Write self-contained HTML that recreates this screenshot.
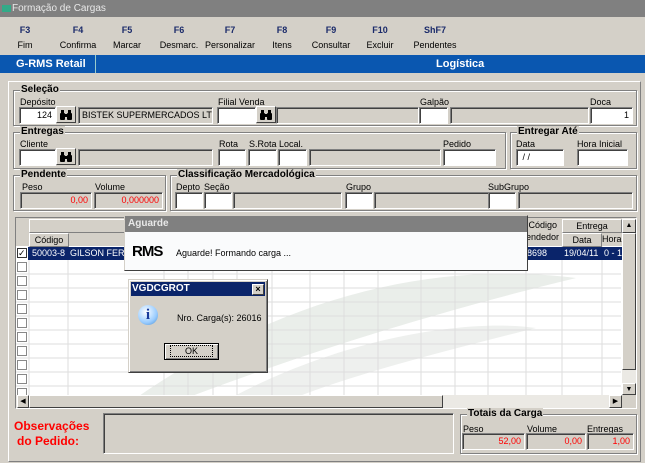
<!DOCTYPE html>
<html><head><meta charset="utf-8"><style>
*{box-sizing:border-box;margin:0;padding:0}
body{width:645px;height:463px;overflow:hidden;background:#d4d0c8;font-family:"Liberation Sans",sans-serif;font-size:9px;color:#000;position:relative}
.a{position:absolute}
.in{position:absolute;height:17px;background:#fff;border:1px solid;border-color:#808080 #fff #fff #808080;box-shadow:inset 1px 1px 0 #404040;font-size:9px;line-height:15px;padding:0 3px;white-space:nowrap;overflow:hidden}
.ro{background:#d4d0c8}
.g{position:absolute;border:1px solid #808080;box-shadow:1px 1px 0 #fff,inset 1px 1px 0 #fff}
.gt{position:absolute;top:-7px;left:6px;background:#d4d0c8;font-weight:bold;font-size:10px;padding:0 1px}
.lb{position:absolute;font-size:9px}
.btn{position:absolute;height:17px;width:20px;background:#d4d0c8;border:1px solid;border-color:#fff #404040 #404040 #fff;text-align:center;padding-top:3px}
.red{color:#f00;text-align:right}
.fk{position:absolute;top:25px;width:50px;text-align:center;font-size:9px}
.fk b{display:block;color:#1a2a6a;margin-bottom:5px}
.sb{position:absolute;background:#d4d0c8;border:1px solid;border-color:#fff #404040 #404040 #fff;font-size:7px;text-align:center;line-height:11px}
</style></head><body>
<div class="a" style="left:0;top:0;width:645px;height:17px;background:#808080;color:#e8e8e8;font-size:10px;line-height:17px;padding-left:12px">Formação de Cargas</div>
<div class="a" style="left:2px;top:5px;width:9px;height:7px;background:#3a8;"></div>

<div class="fk" style="left:0"><b>F3</b>Fim</div>
<div class="fk" style="left:53px"><b>F4</b>Confirma</div>
<div class="fk" style="left:102px"><b>F5</b>Marcar</div>
<div class="fk" style="left:154px"><b>F6</b>Desmarc.</div>
<div class="fk" style="left:204px;width:52px"><b>F7</b>Personalizar</div>
<div class="fk" style="left:257px"><b>F8</b>Itens</div>
<div class="fk" style="left:306px"><b>F9</b>Consultar</div>
<div class="fk" style="left:355px"><b>F10</b>Excluir</div>
<div class="fk" style="left:410px"><b>ShF7</b>Pendentes</div>

<div class="a" style="left:0;top:55px;width:645px;height:18px;background:#0a57b0;color:#fff;font-weight:bold;font-size:11px;line-height:18px">
<span class="a" style="left:16px">G-RMS Retail</span>
<div class="a" style="left:95px;top:0;width:1px;height:18px;background:#9cc"></div>
<span class="a" style="left:436px">Logística</span></div>

<div class="a" style="left:8px;top:81px;width:633px;height:381px;border:1px solid #fff;border-right-color:#808080;border-bottom-color:#808080"></div>

<svg width="0" height="0" style="position:absolute"><defs><g id="bn"><rect x="0" y="3" width="5" height="7" rx="1"/><rect x="7" y="3" width="5" height="7" rx="1"/><rect x="1" y="0" width="3" height="4"/><rect x="8" y="0" width="3" height="4"/><rect x="4" y="4" width="4" height="3"/></g></defs></svg>

<div class="g" style="left:13px;top:90px;width:624px;height:36px"><span class="gt">Seleção</span></div>
<span class="lb" style="left:20px;top:97px">Depósito</span>
<div class="in" style="left:19px;top:107px;width:37px;text-align:right">124</div>
<div class="btn" style="left:56px;top:106px"><svg width="12" height="10"><use href="#bn"/></svg></div>
<div class="in ro" style="left:78px;top:107px;width:135px">BISTEK SUPERMERCADOS LTDA.</div>
<span class="lb" style="left:218px;top:97px">Filial Venda</span>
<div class="in" style="left:217px;top:107px;width:39px"></div>
<div class="btn" style="left:256px;top:106px"><svg width="12" height="10"><use href="#bn"/></svg></div>
<div class="in ro" style="left:276px;top:107px;width:143px"></div>
<span class="lb" style="left:420px;top:97px">Galpão</span>
<div class="in" style="left:419px;top:107px;width:29px"></div>
<div class="in ro" style="left:450px;top:107px;width:139px"></div>
<span class="lb" style="left:590px;top:97px">Doca</span>
<div class="in" style="left:590px;top:107px;width:43px;text-align:right">1</div>

<div class="g" style="left:13px;top:132px;width:493px;height:37px"><span class="gt">Entregas</span></div>
<span class="lb" style="left:20px;top:139px">Cliente</span>
<div class="in" style="left:19px;top:149px;width:37px"></div>
<div class="btn" style="left:56px;top:148px"><svg width="12" height="10"><use href="#bn"/></svg></div>
<div class="in ro" style="left:78px;top:149px;width:135px"></div>
<span class="lb" style="left:219px;top:139px">Rota</span>
<div class="in" style="left:218px;top:149px;width:28px"></div>
<span class="lb" style="left:249px;top:139px">S.Rota</span>
<div class="in" style="left:248px;top:149px;width:29px"></div>
<span class="lb" style="left:279px;top:139px">Local.</span>
<div class="in" style="left:278px;top:149px;width:29px"></div>
<div class="in ro" style="left:309px;top:149px;width:132px"></div>
<span class="lb" style="left:443px;top:139px">Pedido</span>
<div class="in" style="left:443px;top:149px;width:53px"></div>

<div class="g" style="left:510px;top:132px;width:127px;height:37px"><span class="gt">Entregar Até</span></div>
<span class="lb" style="left:516px;top:139px">Data</span>
<div class="in" style="left:516px;top:149px;width:48px">&nbsp;/ /</div>
<span class="lb" style="left:577px;top:139px">Hora Inicial</span>
<div class="in" style="left:577px;top:149px;width:51px"></div>

<div class="g" style="left:13px;top:175px;width:153px;height:36px"><span class="gt">Pendente</span></div>
<span class="lb" style="left:22px;top:182px">Peso</span>
<div class="in ro red" style="left:20px;top:192px;width:72px">0,00</div>
<span class="lb" style="left:95px;top:182px">Volume</span>
<div class="in ro red" style="left:94px;top:192px;width:69px">0,000000</div>

<div class="g" style="left:170px;top:175px;width:467px;height:36px"><span class="gt">Classificação Mercadológica</span></div>
<span class="lb" style="left:176px;top:182px">Depto</span>
<div class="in" style="left:175px;top:192px;width:28px"></div>
<span class="lb" style="left:204px;top:182px">Seção</span>
<div class="in" style="left:204px;top:192px;width:28px"></div>
<div class="in ro" style="left:233px;top:192px;width:109px"></div>
<span class="lb" style="left:346px;top:182px">Grupo</span>
<div class="in" style="left:345px;top:192px;width:28px"></div>
<div class="in ro" style="left:374px;top:192px;width:116px"></div>
<span class="lb" style="left:488px;top:182px">SubGrupo</span>
<div class="in" style="left:488px;top:192px;width:28px"></div>
<div class="in ro" style="left:518px;top:192px;width:115px"></div>

<!-- grid -->
<div class="a" style="left:15px;top:217px;width:622px;height:192px;border:1px solid;border-color:#808080 #fff #fff #808080;background:#fff;overflow:hidden">
<svg class="a" style="left:0;top:0" width="620" height="190">
<path d="M120 180 C250 90 400 40 560 60 C520 70 350 110 150 188Z" fill="#eaeeea"/>
<path d="M200 188 C320 120 450 100 520 110 C440 130 320 160 260 188Z" fill="#eef0ee"/>
<g stroke="#ddd"><path d="M13 0V178M52 0V178M148 0V178M172 0V178M197 0V178M221 0V178M256 0V178M294 0V178M328 0V178M362 0V178M405 0V178M439 0V178M472 0V178M510 0V178M546 0V178M586 0V178"/>
<path d="M0 56H605M0 70H605M0 84H605M0 98H605M0 112H605M0 126H605M0 140H605M0 154H605M0 168H605"/></g>
</svg>
<div class="a" style="left:0;top:0;width:606px;height:28px;background:#d4d0c8"></div>
<div class="a" style="left:13px;top:1px;width:499px;height:14px;border:1px solid;border-color:#fff #808080 #808080 #fff;text-align:center;line-height:12px">Cliente</div>
<div class="a" style="left:13px;top:15px;width:40px;height:14px;border:1px solid;border-color:#fff #808080 #808080 #fff;text-align:center;line-height:12px">Código</div>
<div class="a" style="left:510px;top:1px;width:36px;height:28px;line-height:12px;font-size:9px">&nbsp;Código<br>endedor</div>
<div class="a" style="left:546px;top:1px;width:60px;height:14px;border:1px solid;border-color:#fff #808080 #808080 #fff;text-align:center;line-height:12px">Entrega</div>
<div class="a" style="left:546px;top:15px;width:40px;height:14px;border:1px solid;border-color:#fff #808080 #808080 #fff;text-align:center;line-height:12px">Data</div>
<div class="a" style="left:586px;top:15px;width:20px;height:14px;line-height:12px">Hora</div>
<div class="a" style="left:12px;top:29px;width:594px;height:13px;background:#0a246a;color:#fff;line-height:13px">
<span class="a" style="left:4px">50003-8</span><span class="a" style="left:42px">GILSON FERREIRA</span><span class="a" style="left:499px">8698</span><span class="a" style="left:536px">19/04/11</span><span class="a" style="left:576px">0 - 1</span></div>
<div class="a" style="left:1px;top:30px;width:10px;height:10px;background:#fff;border:1px solid #333;font-size:9px;line-height:8px">✓</div>
<svg class="a" style="left:1px;top:44px" width="11" height="140"><g fill="#fff" stroke="#888"><rect x=".5" y=".5" width="9" height="9"/><rect x=".5" y="14.5" width="9" height="9"/><rect x=".5" y="28.5" width="9" height="9"/><rect x=".5" y="42.5" width="9" height="9"/><rect x=".5" y="56.5" width="9" height="9"/><rect x=".5" y="70.5" width="9" height="9"/><rect x=".5" y="84.5" width="9" height="9"/><rect x=".5" y="98.5" width="9" height="9"/><rect x=".5" y="112.5" width="9" height="9"/><rect x=".5" y="126.5" width="9" height="9"/></g></svg>
<div class="a" style="left:606px;top:0;width:14px;height:178px;background:#ebe9e4"></div>
<div class="sb" style="left:606px;top:1px;width:14px;height:14px">▲</div>
<div class="sb" style="left:606px;top:15px;width:14px;height:137px"></div>
<div class="sb" style="left:606px;top:165px;width:14px;height:12px">▼</div>
<div class="a" style="left:0;top:177px;width:606px;height:13px;background:#ebe9e4"></div>
<div class="sb" style="left:1px;top:177px;width:12px;height:13px">◀</div>
<div class="sb" style="left:13px;top:177px;width:414px;height:13px"></div>
<div class="sb" style="left:593px;top:177px;width:13px;height:13px">▶</div>
<div class="a" style="left:606px;top:177px;width:14px;height:13px;background:#d4d0c8"></div>
</div>

<!-- Aguarde -->
<div class="a" style="left:124px;top:215px;width:404px;height:56px;border:1px solid;border-color:#d4d0c8 #404040 #404040 #d4d0c8;background:#fafbfc">
<div class="a" style="left:0;top:0;width:402px;height:16px;background:#808080;color:#e8e8e8;font-weight:bold;font-size:10px;line-height:16px;padding-left:3px">Aguarde</div>
<span class="a" style="left:7px;top:27px;font-weight:900;font-size:15px;letter-spacing:-1px">RMS</span>
<span class="a" style="left:51px;top:32px;font-size:9px">Aguarde! Formando carga ...</span>
</div>

<!-- msgbox -->
<div class="a" style="left:128px;top:279px;width:140px;height:94px;background:#d4d0c8;border:1px solid;border-color:#d4d0c8 #404040 #404040 #d4d0c8;box-shadow:inset 1px 1px 0 #fff,inset -1px -1px 0 #808080">
<div class="a" style="left:2px;top:2px;width:134px;height:14px;background:#0a246a;color:#fff;font-weight:bold;font-size:10px;line-height:14px;padding-left:1px">VGDCGROT</div>
<div class="a" style="left:123px;top:4px;width:12px;height:11px;background:#d4d0c8;border:1px solid;border-color:#fff #404040 #404040 #fff;font-size:9px;line-height:8px;text-align:center;font-weight:bold">×</div>
<div class="a" style="left:9px;top:25px;width:20px;height:20px;border-radius:50%;background:radial-gradient(circle at 40% 35%,#fff,#9cf 60%,#48c);color:#1a3a9a;font-weight:bold;font-family:'Liberation Serif',serif;font-size:15px;text-align:center;line-height:20px">i</div>
<span class="a" style="left:48px;top:33px;font-size:9px">Nro. Carga(s): 26016</span>
<div class="a" style="left:35px;top:63px;width:55px;height:17px;border:1px solid #000;box-shadow:inset 1px 1px 0 #fff,inset -1px -1px 0 #808080;text-align:center;line-height:15px;font-size:9px"><span style="outline:1px dotted #000;padding:0 14px">OK</span></div>
</div>

<!-- bottom -->
<div class="a" style="left:14px;top:419px;width:68px;color:#f00;font-weight:bold;font-size:12px;text-align:center;line-height:15px">Observações do Pedido:</div>
<div class="in ro" style="left:103px;top:413px;width:351px;height:41px"></div>
<div class="g" style="left:460px;top:414px;width:177px;height:40px"><span class="gt">Totais da Carga</span></div>
<span class="lb" style="left:463px;top:424px">Peso</span>
<div class="in ro red" style="left:462px;top:433px;width:63px">52,00</div>
<span class="lb" style="left:527px;top:424px">Volume</span>
<div class="in ro red" style="left:526px;top:433px;width:60px">0,00</div>
<span class="lb" style="left:587px;top:424px">Entregas</span>
<div class="in ro red" style="left:587px;top:433px;width:47px">1,00</div>
</body></html>
